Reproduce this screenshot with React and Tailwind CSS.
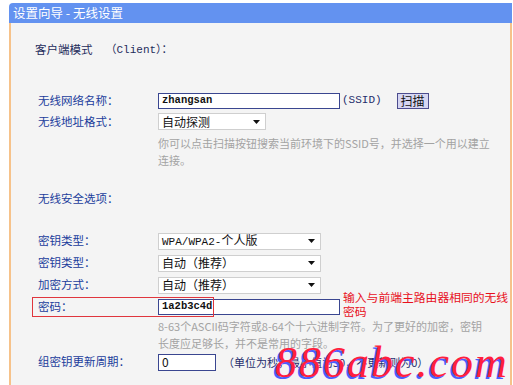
import React from "react";

const Arrow = () => (
    <svg width="7" height="4" viewBox="0 0 7 4" className="shrink-0">
        <path d="M0 0h7L3.5 4z" fill="#111" />
    </svg>
);

function Select({ value, width }) {
    return (
        <div
            className={`${width} h-[17px] bg-white border border-[#cfcfcf] flex items-center justify-between pl-[3px] pr-[5px] text-[12px] text-[#111] whitespace-nowrap`}
        >
            <span>{value}</span>
            <Arrow />
        </div>
    );
}

function Row({ label, h = "h-[21px]", children }) {
    return (
        <div className={`flex items-center ${h}`}>
            <div className="w-[120px] text-[11.5px] text-[#1b3d9c] whitespace-nowrap">{label}</div>
            <div className="flex items-center">{children}</div>
        </div>
    );
}

export default function App() {
    return (
        <div className="relative w-[513px] h-[385px] bg-white overflow-hidden font-['Noto_Sans_CJK_SC','Liberation_Sans',sans-serif]">
            <div className="ml-[9px] mt-[3px] w-[503px] h-[382px] flex flex-col">
                <div className="h-[20px] bg-[#6392f0] rounded-tl-[4px] flex items-center pl-[4px] text-[12.5px] text-white">
                    设置向导 - 无线设置
                </div>
                <div className="flex-1 bg-[#f4f4f4] border-l-2 border-r-2 border-[#f6c28a] pl-[27px] pt-[19px]">
                    <div className="h-[16px] flex items-center -ml-[3px] text-[11.5px] text-[#1f2d5c]">
                        <span>客户端模式</span>
                        <span className="ml-[13px] font-['Liberation_Mono','Noto_Sans_CJK_SC',monospace] text-[11px]">
                            （Client）：
                        </span>
                    </div>

                    <div className="mt-[32px]">
                        <Row label="无线网络名称：">
                            <div className="w-[182px] h-[16px] bg-white border border-[#3a4690] flex items-center pl-[3px] text-[10.5px] font-bold text-[#111] font-['Liberation_Mono',monospace]">
                                zhangsan
                            </div>
                            <span className="ml-[2px] text-[11px] text-[#1f2d6c] font-['Liberation_Mono',monospace]">
                                (SSID)
                            </span>
                            <button className="ml-[15px] h-[16px] px-[3px] bg-[#d6d6f2] border border-[#4c4c8e] text-[12px] leading-none text-[#111]">
                                扫描
                            </button>
                        </Row>
                        <Row label="无线地址格式：">
                            <Select value="自动探测" width="w-[108px]" />
                        </Row>
                    </div>

                    <div className="ml-[120px] mt-[3px] text-[11px] leading-[17px] text-[#a3a3a3] whitespace-nowrap">
                        <div>你可以点击扫描按钮搜索当前环境下的SSID号，并选择一个用以建立</div>
                        <div>连接。</div>
                    </div>

                    <div className="mt-[22px] h-[16px] flex items-center text-[11.5px] text-[#1b3d9c]">
                        无线安全选项：
                    </div>

                    <div className="mt-[23px]">
                        <Row label="密钥类型：" h="h-[22px]">
                            <Select
                                value={
                                    <span>
                                        <span className="font-['Liberation_Mono',monospace] text-[11px]">WPA/WPA2-</span>
                                        个人版
                                    </span>
                                }
                                width="w-[163px]"
                            />
                        </Row>
                        <Row label="密钥类型：" h="h-[22px]">
                            <Select value="自动（推荐）" width="w-[163px]" />
                        </Row>
                        <Row label="加密方式：" h="h-[22px]">
                            <Select value="自动（推荐）" width="w-[163px]" />
                        </Row>
                    </div>

                    <div className="relative">
                        <Row label="密码：" h="h-[21px]">
                            <div className="w-[182px] h-[16px] bg-white border border-[#3a4690] flex items-center pl-[3px] text-[10.5px] font-bold text-[#111] font-['Liberation_Mono',monospace]">
                                1a2b3c4d
                            </div>
                        </Row>
                        <div className="absolute left-[-6px] top-[1px] w-[182px] h-[20px] border border-[#e0363d]" />
                        <div className="absolute left-[305px] top-[-6px] text-[11.8px] leading-[14px] text-[#e8101c] whitespace-nowrap">
                            <div>输入与前端主路由器相同的无线</div>
                            <div>密码</div>
                        </div>
                    </div>

                    <div className="ml-[120px] mt-[1px] text-[11px] leading-[17px] text-[#a3a3a3] whitespace-nowrap">
                        <div>8-63个ASCII码字符或8-64个十六进制字符。为了更好的加密，密钥</div>
                        <div>长度应足够长，并不是常用的字段。</div>
                    </div>

                    <Row label="组密钥更新周期：" h="h-[20px]">
                        <div className="w-[58px] h-[17px] bg-white border border-[#3a4690] flex items-center pl-[3px] text-[12px] text-[#111]">
                            0
                        </div>
                        <span className="ml-[7px] text-[11px] text-[#1f2d6c] whitespace-nowrap">
                            （单位为秒，最小值为30，不更新则为0）
                        </span>
                    </Row>
                </div>
            </div>

            <div className="absolute left-[275px] top-[341px] text-[44px] leading-none italic font-['Liberation_Serif',serif] text-[#ff1f3f] [text-shadow:-2px_2px_0_#4b5dff] tracking-[2px] whitespace-nowrap">
                886abc.com
            </div>
        </div>
    );
}
